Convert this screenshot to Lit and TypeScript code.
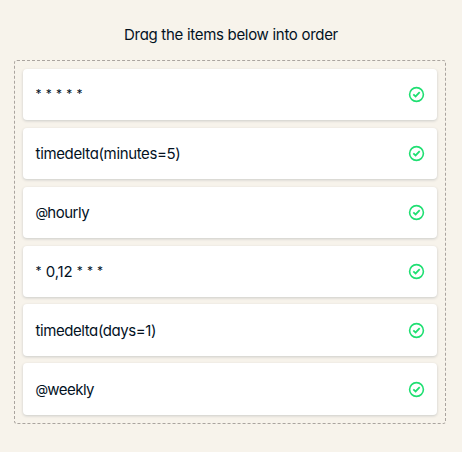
import { LitElement, html, css } from "lit";
import { customElement, property } from "lit/decorators.js";

@customElement("order-card")
class OrderCard extends LitElement {
  static styles = css`
    :host {
      display: flex;
      align-items: center;
      justify-content: space-between;
      box-sizing: border-box;
      height: 51.45px;
      padding: 0 12px 0 12.6px;
      background: #fff;
      border-radius: 4px;
      box-shadow: 0 1px 3px rgba(5, 25, 45, 0.18);
    }
    .label {
      padding-top: 1px;
      white-space: pre;
    }
    .star {
      display: inline-block;
      width: 6px;
      font-size: 12px;
      line-height: 1;
      letter-spacing: 0;
      vertical-align: 2px;
    }
    .at {
      font-size: 13px;
      line-height: 1;
      letter-spacing: -0.8px;
      vertical-align: 1px;
    }
    .icon {
      display: block;
      width: 17px;
      height: 17px;
    }
  `;
  @property() label = "";
  @property({ type: Number }) tracking = 0;

  render() {
    const parts = this.label.split(/([*@])/).map((part) =>
      part === "*"
        ? html`<span class="star">*</span>`
        : part === "@"
          ? html`<span class="at">@</span>`
          : part
    );
    return html`
      <span class="label" style="letter-spacing:${this.tracking}px">${parts}</span>
      <svg class="icon" viewBox="0 0 17 17" fill="none" stroke="#1fdf72" stroke-width="1.6">
        <circle cx="8.5" cy="8.5" r="6.9" />
        <path d="M5.3 8.3L7.6 10.4L11.7 6.2" stroke-width="1.8" />
      </svg>
    `;
  }
}

@customElement("app-root")
class AppRoot extends LitElement {
  static styles = css`
    :host {
      display: block;
      box-sizing: border-box;
      height: 452px;
      padding: 25px 16px 0 14px;
      background: #f7f3eb;
      color: #03121f;
      font: 15px/20px Inter, "Noto Sans", sans-serif;
      font-feature-settings: "cv11", "calt" 0;
    }
    .title {
      margin: 0 0 15px;
      padding-left: 2px;
      font: inherit;
      line-height: 20px;
      text-align: center;
      letter-spacing: -0.3px;
    }
    .list {
      display: flex;
      flex-direction: column;
      gap: 7.43px;
      padding: 8px 8px 8.3px;
      border: 1px dashed #aaa49f;
      border-radius: 3px;
    }
  `;

  items: [string, number][] = [
    ["* * * * *", 0],
    ["timedelta(minutes=5)", -0.36],
    ["@hourly", -0.5],
    ["* 0,12 * * *", -0.1],
    ["timedelta(days=1)", -0.43],
    ["@weekly", -0.55],
  ];

  render() {
    return html`
      <h1 class="title">Drag the items below into order</h1>
      <div class="list">
        ${this.items.map(
          ([label, tracking]) => html`<order-card .label=${label} .tracking=${tracking}></order-card>`
        )}
      </div>
    `;
  }
}
